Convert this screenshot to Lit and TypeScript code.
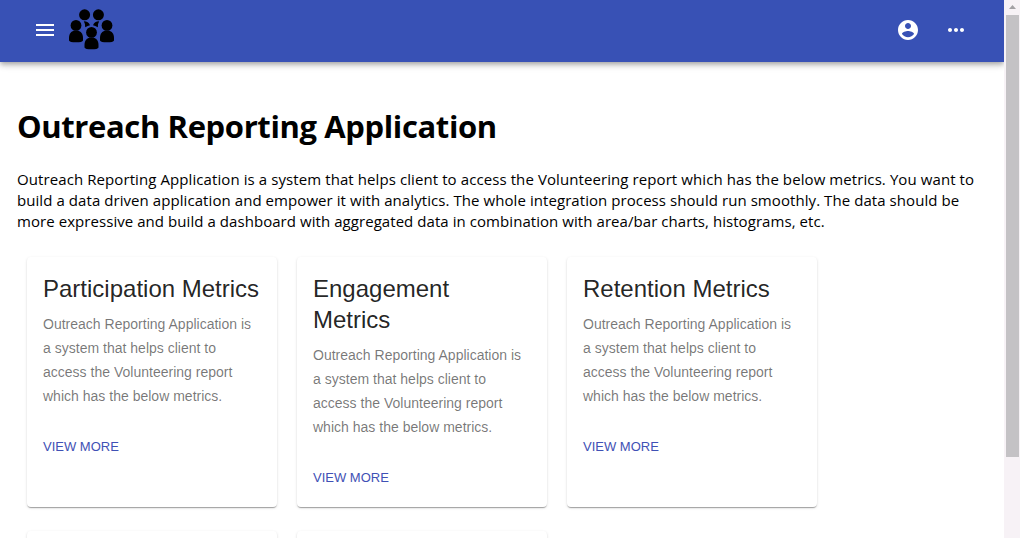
import { LitElement, html, css, svg, nothing } from "lit";
import { customElement, property } from "lit/decorators.js";

@customElement("metric-card")
export class MetricCard extends LitElement {
  @property() heading = "";

  static styles = css`
    :host {
      display: block;
      box-sizing: border-box;
      width: 250px;
      height: 250px;
      padding: 16px;
      border-radius: 4px;
      background: #fff;
      overflow: hidden;
      font-family: "Liberation Sans", Arial, sans-serif;
      box-shadow: 0 2px 1px -1px rgba(0, 0, 0, 0.2), 0 1px 1px 0 rgba(0, 0, 0, 0.14),
        0 1px 3px 0 rgba(0, 0, 0, 0.12);
    }
    h2 {
      margin: 0 0 8px;
      font-size: 24px;
      font-weight: 400;
      line-height: 31px;
      color: rgba(0, 0, 0, 0.87);
    }
    p {
      margin: 0;
      font-size: 14px;
      line-height: 24px;
      letter-spacing: 0.01px;
      color: rgba(0, 0, 0, 0.54);
    }
    a {
      display: block;
      margin-top: 31px;
      font-size: 13px;
      line-height: 16px;
      color: #3f51b5;
    }
  `;

  render() {
    if (!this.heading) return nothing;
    return html`
      <h2>${this.heading}</h2>
      <p>Outreach Reporting Application is a system that helps client to access the Volunteering report which has the below metrics.</p>
      <a>VIEW MORE</a>
    `;
  }
}

const person = (x: number, y: number) => svg`
  <g transform="translate(${x} ${y})">
    <circle cx="0" cy="0" r="5.4" />
    <path d="M-7 15V12.4C-7 8.4-4.6 6-2 5.2H2C4.6 6 7 8.4 7 12.4V15Q6.4 16.9 0 16.9T-7 15Z" />
  </g>`;

@customElement("app-root")
export class AppRoot extends LitElement {
  static styles = css`
    :host {
      display: flex;
      height: 538px;
      overflow: hidden;
      background: #fff;
      color: #000;
      font-family: "Open Sans", "Noto Sans", sans-serif;
    }
    .page {
      width: 1004px;
      height: 538px;
      overflow: hidden;
    }
    header {
      box-sizing: border-box;
      height: 62px;
      padding: 0 36px 2px 33px;
      display: flex;
      align-items: center;
      background: #3851b5;
      box-shadow: 0 2px 4px -1px rgba(0, 0, 0, 0.2), 0 4px 5px 0 rgba(0, 0, 0, 0.14),
        0 1px 10px 0 rgba(0, 0, 0, 0.12);
    }
    svg {
      display: block;
      flex: none;
    }
    .white {
      fill: #fff;
    }
    .logo {
      margin-left: 11px;
    }
    .actions {
      margin-left: auto;
      display: flex;
      gap: 24px;
    }
    main {
      padding: 43px 17px 0;
    }
    h1 {
      margin: 0;
      font-size: 31px;
      line-height: 43px;
      font-weight: 700;
      letter-spacing: -0.38px;
      white-space: nowrap;
    }
    .intro {
      margin: 21px 0 0;
      font-size: 15px;
      line-height: 21px;
      white-space: nowrap;
    }
    .intro span {
      display: block;
    }
    .l1 {
      letter-spacing: 0.089px;
    }
    .l2 {
      letter-spacing: 0.07px;
    }
    .l3 {
      letter-spacing: 0.06px;
    }
    .cards {
      display: grid;
      grid-template-columns: repeat(3, 250px);
      gap: 24px 20px;
      padding: 25px 10px 0;
    }
    .scrollbar {
      box-sizing: border-box;
      width: 16px;
      height: 538px;
      padding: 0 1px 0 2px;
      background: #f7f2f6;
    }
    .up {
      height: 15px;
    }
    .thumb {
      height: 442px;
      background: #c4c2c5;
    }
  `;

  render() {
    const cards = ["Participation Metrics", "Engagement Metrics", "Retention Metrics", "", ""];
    return html`
      <div class="page">
        <header>
          <svg class="white" width="24" height="24" viewBox="0 0 24 24"><path d="M3 18h18v-2H3v2zm0-5h18v-2H3v2zm0-7v2h18V6H3z" /></svg>
          <svg class="logo" width="48" height="48" viewBox="0 0 48 48">
            <circle cx="16.6" cy="8.8" r="5.5" />
            <circle cx="30.4" cy="8.8" r="5.5" />
            <path d="M15.8 15.2Q20.6 15.4 22 19.2Q19.8 19.6 17.2 21.2Q17.4 17.8 15.8 15.2Z" />
            <path d="M31.2 15.2Q26.4 15.4 25 19.2Q27.2 19.6 29.8 21.2Q29.6 17.8 31.2 15.2Z" />
            ${person(8, 19.4)} ${person(39, 19.4)} ${person(23.5, 26.4)}
          </svg>
          <div class="actions">
            <svg class="white" width="24" height="24" viewBox="0 0 24 24"><path d="M12 2C6.48 2 2 6.48 2 12s4.48 10 10 10 10-4.48 10-10S17.52 2 12 2zm0 3c1.66 0 3 1.34 3 3s-1.34 3-3 3-3-1.34-3-3 1.34-3 3-3zm0 14.2c-2.5 0-4.71-1.28-6-3.22.03-1.99 4-3.08 6-3.08 1.99 0 5.97 1.09 6 3.08-1.29 1.94-3.5 3.22-6 3.22z" /></svg>
            <svg class="white" width="24" height="24" viewBox="0 0 24 24"><path d="M6 10c-1.1 0-2 .9-2 2s.9 2 2 2 2-.9 2-2-.9-2-2-2zm12 0c-1.1 0-2 .9-2 2s.9 2 2 2 2-.9 2-2-.9-2-2-2zm-6 0c-1.1 0-2 .9-2 2s.9 2 2 2 2-.9 2-2-.9-2-2-2z" /></svg>
          </div>
        </header>
        <main>
          <h1>Outreach Reporting Application</h1>
          <p class="intro">
            <span class="l1">Outreach Reporting Application is a system that helps client to access the Volunteering report which has the below metrics. You want to</span>
            <span class="l2">build a data driven application and empower it with analytics. The whole integration process should run smoothly. The data should be</span>
            <span class="l3">more expressive and build a dashboard with aggregated data in combination with area/bar charts, histograms, etc.</span>
          </p>
          <div class="cards">${cards.map((c) => html`<metric-card .heading=${c}></metric-card>`)}</div>
        </main>
      </div>
      <div class="scrollbar">
        <svg class="up" width="13" height="15" viewBox="0 0 13 15"><path d="M3 9L6.5 5L10 9Z" fill="#a3a1a4" /></svg>
        <div class="thumb"></div>
      </div>
    `;
  }
}
